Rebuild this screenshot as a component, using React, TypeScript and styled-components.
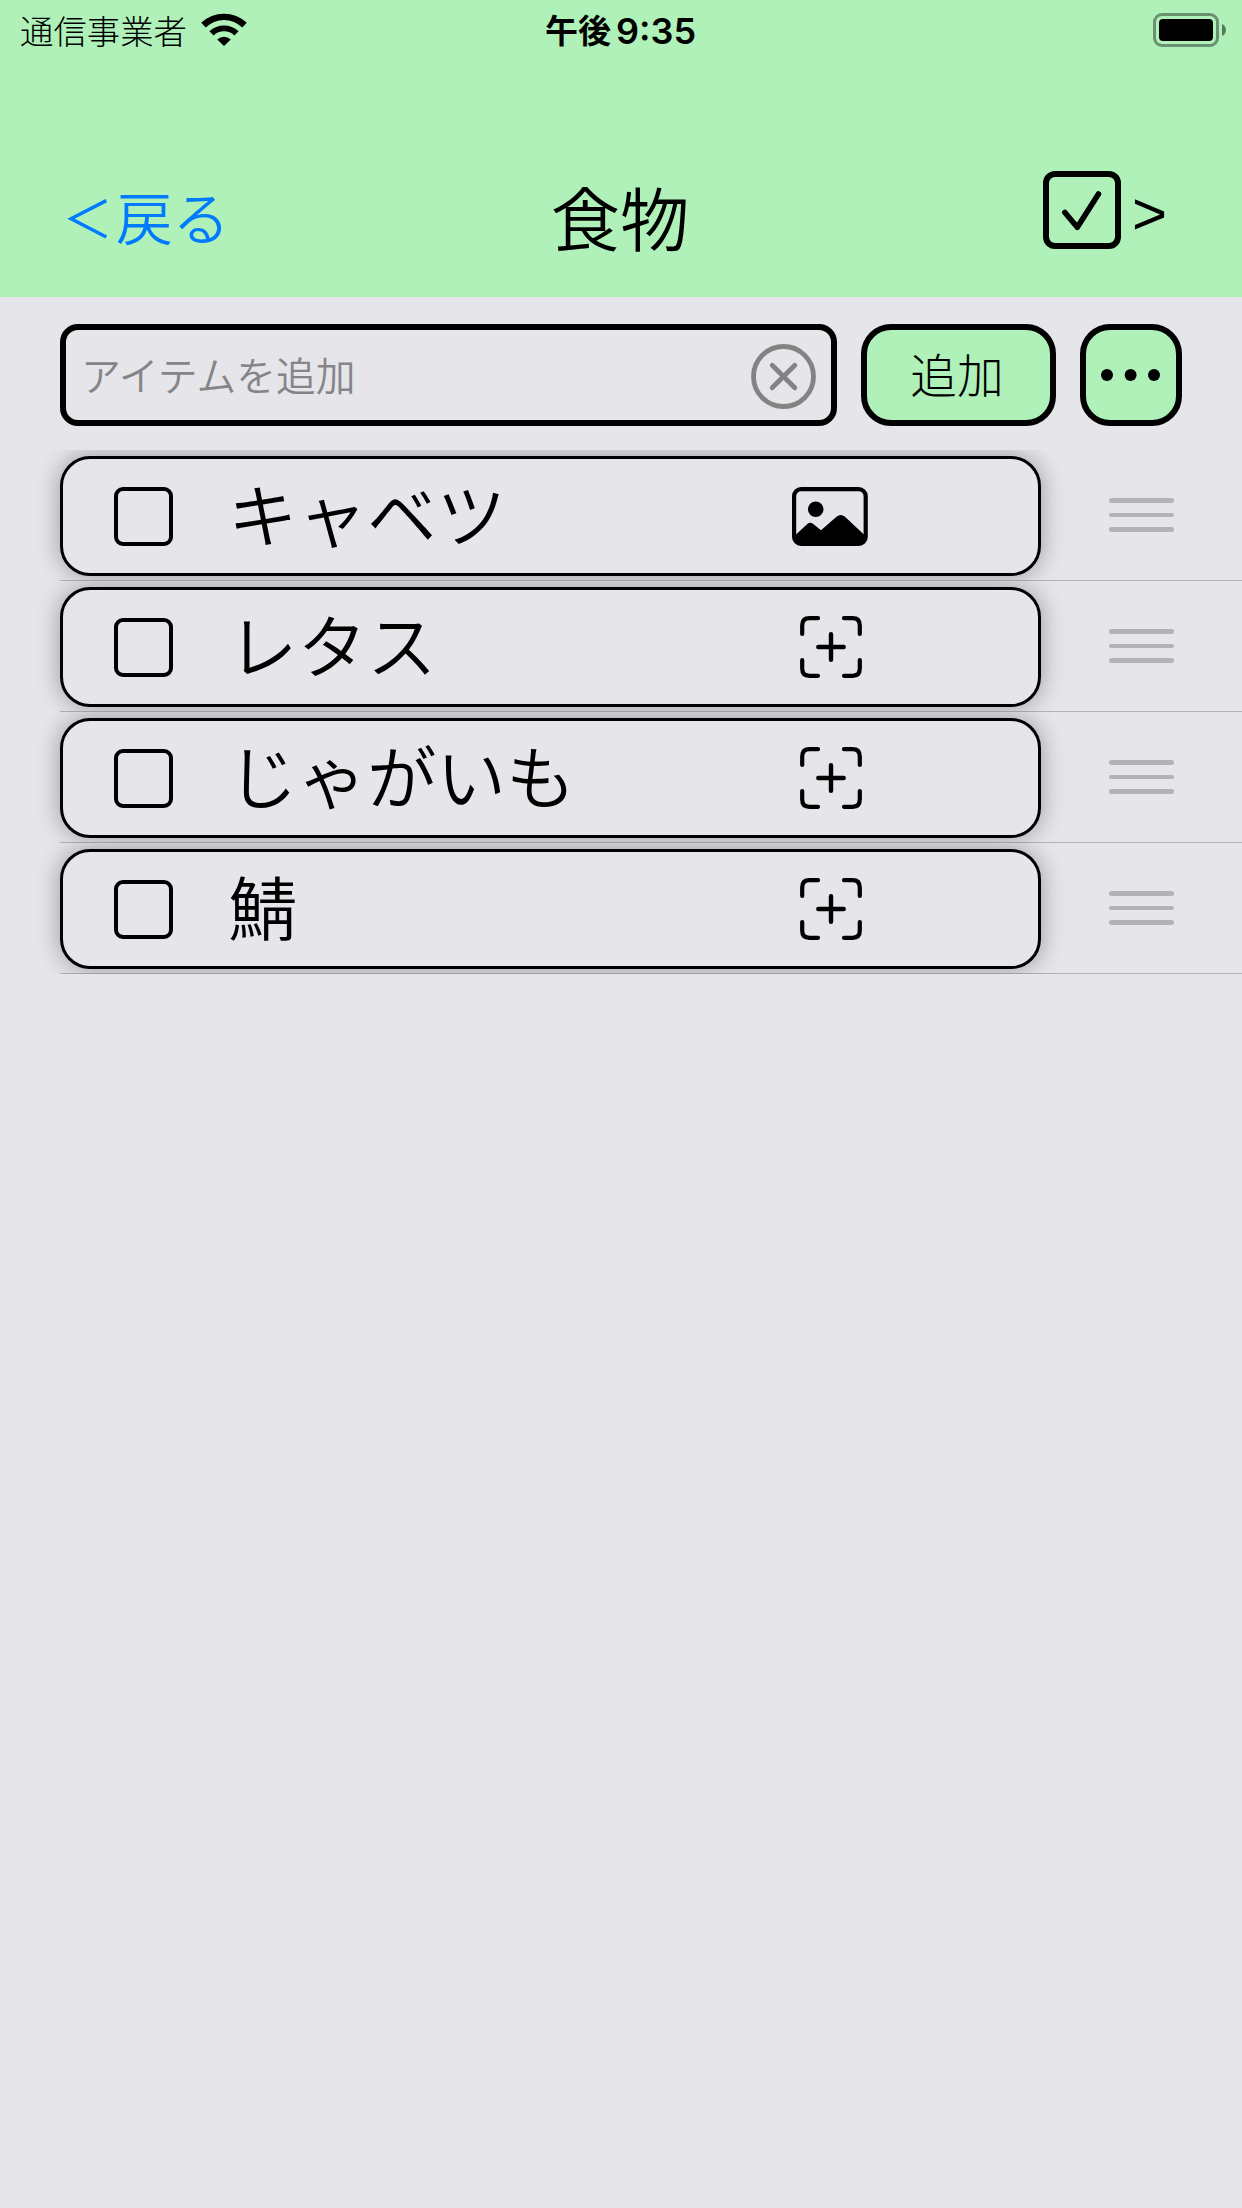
import React from 'react';
import styled, { createGlobalStyle } from 'styled-components';

const mint = '#aff1b9';
const paper = '#e5e5ea';

const GlobalStyle = createGlobalStyle`
  *, *::before, *::after { box-sizing: border-box; }
  body {
    margin: 0;
    background: ${paper};
    color: #000;
    font-family: Inter, "Noto Sans CJK JP", sans-serif;
    font-weight: 300;
  }
  button {
    font: inherit;
    color: inherit;
    background: none;
    border: 0;
    padding: 0;
  }
  svg { display: block; flex: none; }
`;

const Screen = styled.div`
  width: 1242px;
  height: 2208px;
  display: flex;
  flex-direction: column;
  overflow: hidden;
  background: ${paper};
`;

const Header = styled.header`
  height: 297px;
  background: ${mint};
  display: flex;
  flex-direction: column;
`;

const StatusBar = styled.div`
  height: 60px;
  padding: 0 16px 0 20px;
  display: grid;
  grid-template-columns: 1fr auto 1fr;
  align-items: start;
`;

const Carrier = styled.div`
  display: flex;
  gap: 14px;
  padding-top: 13px;
  font-size: 33.4px;
  line-height: 38px;
`;

const Clock = styled.div`
  display: flex;
  gap: 5px;
  padding: 13px 5px 0 0;
  font-size: 33px;
  line-height: 36px;
  font-weight: 600;
`;

const Digits = styled.span`
  font-size: 36px;
`;

const BatteryWrap = styled.div`
  display: flex;
  justify-content: flex-end;
  padding-top: 13px;
`;

const NavBar = styled.nav`
  height: 237px;
  padding: 111px 59px 0;
  display: grid;
  grid-template-columns: 1fr auto 1fr;
  align-items: start;
`;

const BackButton = styled.button`
  justify-self: start;
  display: flex;
  margin-top: 17px;
  font-size: 56.7px;
  line-height: 64px;
  font-weight: 350;
  color: #007aff;
`;

const BackMark = styled.span`
  width: 57px;
  font-size: 51px;
  font-weight: 400;
  text-align: center;
`;

const Title = styled.h1`
  margin: 10px 2px 0 0;
  font-size: 69.3px;
  line-height: 80px;
  font-weight: 350;
`;

const CheckedButton = styled.button`
  justify-self: end;
  display: flex;
  align-items: center;
  gap: 11px;
  margin-right: 16px;
  font-family: "Liberation Sans", sans-serif;
  font-size: 60px;
  line-height: 70px;
`;

const NextMark = styled.span`
  padding-top: 8px;
`;

const Toolbar = styled.form`
  height: 153px;
  padding: 27px 60px 0;
  display: flex;
  gap: 24px;
`;

const Field = styled.div`
  flex: 1;
  height: 102px;
  padding: 3px 15px 0 15px;
  border: 6px solid #000;
  border-radius: 18px;
  display: flex;
  align-items: center;
  justify-content: space-between;
`;

const Placeholder = styled.span`
  font-size: 39.8px;
  line-height: 44px;
  font-weight: 350;
  color: #858589;
`;

const ToolButton = styled.button<{ $width: number }>`
  width: ${(p) => p.$width}px;
  height: 102px;
  border: 6px solid #000;
  border-radius: 30px;
  background: ${mint};
  display: flex;
  align-items: center;
  justify-content: center;
  font-size: 46.7px;
`;

const AddLabel = styled.span`
  margin: 0 3px 5px 0;
`;

const List = styled.ul`
  margin: 0;
  padding: 0;
  list-style: none;
`;

const Row = styled.li`
  height: 131px;
  padding: 6px 68px 0 60px;
  display: flex;
  justify-content: space-between;
  overflow: hidden;
  background: linear-gradient(#b3b2b7, #b3b2b7) 60px 130px / 1182px 1px no-repeat;
`;

const Card = styled.div`
  width: 981px;
  height: 120px;
  padding-left: 51px;
  border: 3px solid #000;
  border-radius: 30px;
  background: ${paper};
  box-shadow: 0 0 24px rgba(0, 0, 0, 0.33);
  display: flex;
  align-items: center;
`;

const RowCheckbox = styled.span`
  width: 59px;
  height: 59px;
  border: 4.5px solid #000;
  border-radius: 9px;
`;

const ItemName = styled.span`
  flex: 1;
  margin-left: 55px;
  padding-top: 2px;
  font-size: 69.5px;
  line-height: 84px;
  font-weight: 350;
`;

const PhotoSlot = styled.span`
  width: 76px;
  margin-right: 170px;
  display: flex;
  justify-content: center;
`;

const Handle = styled.span`
  width: 65px;
  padding-top: 42px;
  display: flex;
  flex-direction: column;
  gap: 10px;
`;

const HandleBar = styled.span`
  height: 4.5px;
  border-radius: 3px;
  background: #b3b2b7;
`;

const Wifi = () => (
  <svg width="46" height="34" viewBox="-23 -33 46 34">
    <path d="M-22.8-23.2A33 33 0 0 1 22.8-23.2L18.3-18.5A26 26 0 0 0-18.3-18.5Z" />
    <path d="M-14.6-14.8A21.5 21.5 0 0 1 14.6-14.8L10.4-10.6A15 15 0 0 0-10.4-10.6Z" />
    <path d="M-6.8-6.6A10 10 0 0 1 6.8-6.6L0 0Z" />
  </svg>
);

const Battery = () => (
  <svg width="73" height="34" viewBox="0 0 73 34">
    <rect x="1.5" y="1.5" width="63" height="31" rx="7.5" fill="none" stroke="#000" strokeOpacity=".4" strokeWidth="3" />
    <rect x="6" y="6" width="54" height="22" rx="4" />
    <path d="M69 11C74.3 13 74.3 21 69 23Z" fillOpacity=".5" />
  </svg>
);

const CheckedBox = () => (
  <svg width="78" height="78" viewBox="0 0 78 78" fill="none" stroke="#000" strokeLinecap="round" strokeLinejoin="round">
    <rect x="3" y="3" width="72" height="72" rx="9" strokeWidth="6" />
    <path d="M21.9 41.5 34.3 56.3 55.5 23" strokeWidth="5.6" />
  </svg>
);

const ClearIcon = () => (
  <svg width="65" height="65" viewBox="0 0 65 65" fill="none" stroke="#838383" strokeWidth="4.8" strokeLinecap="round">
    <circle cx="32.5" cy="32.5" r="30" />
    <path d="M21.2 21.2 43.8 43.8M43.8 21.2 21.2 43.8" />
  </svg>
);

const MoreIcon = () => (
  <svg width="61" height="12" viewBox="0 0 61 12">
    <circle cx="6" cy="6" r="6" />
    <circle cx="29.6" cy="6" r="6" />
    <circle cx="53" cy="6" r="6" />
  </svg>
);

const PhotoIcon = () => (
  <svg width="76" height="59" viewBox="0 0 76 59">
    <rect x="2.1" y="2.1" width="71.6" height="54.8" rx="7" fill="none" stroke="#000" strokeWidth="4.2" />
    <circle cx="23.7" cy="22.3" r="7.8" />
    <path d="M3 48.5 15.3 37Q18.3 34.6 21.3 37L29 43.2 44.5 29.8Q48.7 26.4 53 29.8L73 48.5V52Q73 58 67 58H9Q3 58 3 52Z" />
  </svg>
);

const AddPhotoIcon = () => (
  <svg width="62" height="62" viewBox="-1 0 62 62" fill="none" stroke="#000" strokeWidth="4.2" strokeLinecap="round" overflow="visible">
    <path d="M2.2 18V9.5Q2.2 2.2 9.5 2.2H18M44 2.2H52.5Q59.8 2.2 59.8 9.5V18M59.8 44V52.5Q59.8 59.8 52.5 59.8H44M18 59.8H9.5Q2.2 59.8 2.2 52.5V44" />
    <path d="M31 18.3V43.7M18.3 31H43.7" strokeWidth="4.4" />
  </svg>
);

const items = [
  { name: 'キャベツ', photo: true },
  { name: 'レタス', photo: false },
  { name: 'じゃがいも', photo: false },
  { name: '鯖', photo: false },
];

export default function App() {
  return (
    <>
      <GlobalStyle />
      <Screen>
        <Header>
          <StatusBar>
            <Carrier>
              <span>通信事業者</span>
              <Wifi />
            </Carrier>
            <Clock>
              <span>午後</span>
              <Digits>9:35</Digits>
            </Clock>
            <BatteryWrap>
              <Battery />
            </BatteryWrap>
          </StatusBar>
          <NavBar>
            <BackButton>
              <BackMark>＜</BackMark>
              <span>戻る</span>
            </BackButton>
            <Title>食物</Title>
            <CheckedButton>
              <CheckedBox />
              <NextMark>&gt;</NextMark>
            </CheckedButton>
          </NavBar>
        </Header>
        <Toolbar>
          <Field>
            <Placeholder>アイテムを追加</Placeholder>
            <ClearIcon />
          </Field>
          <ToolButton type="button" $width={195}>
            <AddLabel>追加</AddLabel>
          </ToolButton>
          <ToolButton type="button" $width={102}>
            <MoreIcon />
          </ToolButton>
        </Toolbar>
        <List>
          {items.map((item) => (
            <Row key={item.name}>
              <Card>
                <RowCheckbox />
                <ItemName>{item.name}</ItemName>
                <PhotoSlot>{item.photo ? <PhotoIcon /> : <AddPhotoIcon />}</PhotoSlot>
              </Card>
              <Handle>
                <HandleBar />
                <HandleBar />
                <HandleBar />
              </Handle>
            </Row>
          ))}
        </List>
      </Screen>
    </>
  );
}
